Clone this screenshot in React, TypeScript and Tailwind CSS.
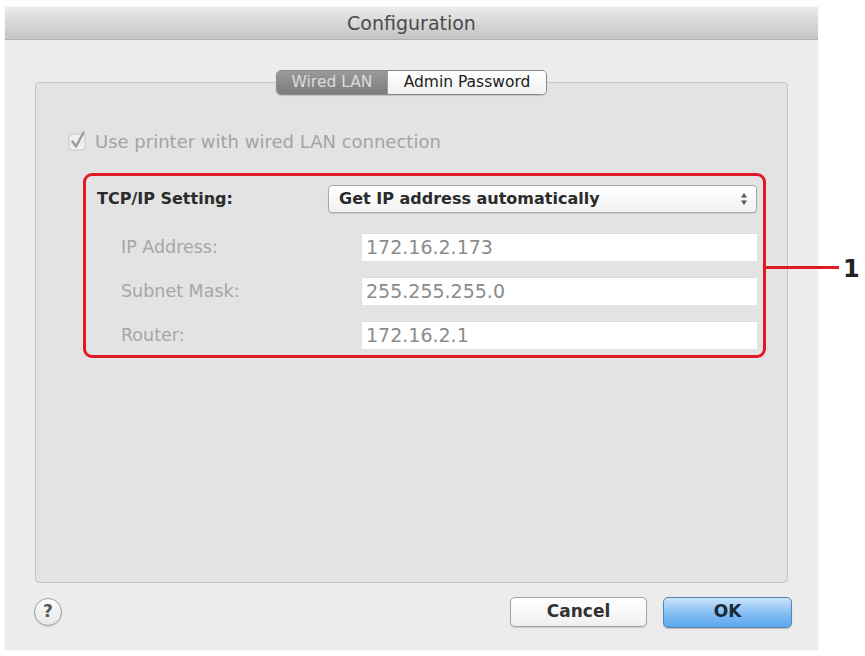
import React from 'react';

const font = { fontFamily: '"DejaVu Sans", "Liberation Sans", sans-serif' };

const fields = [
  { label: 'IP Address:', value: '172.16.2.173' },
  { label: 'Subnet Mask:', value: '255.255.255.0' },
  { label: 'Router:', value: '172.16.2.1' },
];

const App: React.FC = () => {
  return (
    <div className="relative w-[865px] h-[656px] bg-white pt-[7px] pl-[5px]" style={font}>
      {/* window */}
      <div className="w-[813px] h-[643px] bg-[#ececec] flex flex-col shadow-[0_0_2px_rgba(0,0,0,0.08)]">
        <div className="h-[33px] flex items-center justify-center bg-gradient-to-b from-[#ebebeb] to-[#c4c4c4] border-b border-[#b0b0b0] text-[19px] text-[#4b4b4b]">
          Configuration
        </div>

        <div className="flex flex-col px-[30px] pt-[42px]">
          {/* group box */}
          <div className="h-[501px] bg-[#e3e3e3] border border-[#c4c4c4] rounded-[4px] flex flex-col">
            <div className="flex justify-center -mt-[13px]">
              <div className="flex h-[25px] rounded-[5px] border border-[#8a8a8a] overflow-hidden text-[15.5px] shadow-[0_1px_1px_rgba(0,0,0,0.15)]">
                <div className="w-[110px] flex items-center justify-center bg-gradient-to-b from-[#9a9a9a] to-[#7c7c7c] text-[#dcdcdc]">
                  Wired LAN
                </div>
                <div className="w-[159px] flex items-center justify-center bg-gradient-to-b from-white to-[#f1f1f1] text-[#1e1e1e] border-l border-[#9a9a9a]">
                  Admin Password
                </div>
              </div>
            </div>

            {/* checkbox */}
            <div className="flex items-center gap-[7px] ml-[32px] mt-[36px] h-[20px]">
              <svg width="20" height="20" viewBox="0 0 20 20">
                <rect x="1" y="3" width="16" height="16" rx="3" fill="#efefef" stroke="#c9c9c9" />
                <path d="M4.5 10.5 L8 15.5 L15.5 1.5" fill="none" stroke="#9c9c9c" strokeWidth="2.4" strokeLinecap="round" strokeLinejoin="round" />
              </svg>
              <span className="text-[18px] text-[#a3a3a3]">Use printer with wired LAN connection</span>
            </div>

            {/* settings block */}
            <div className="ml-[47px] mt-[22px] w-[683px] h-[185px] border-[3px] border-[#e11b25] rounded-[9px] pt-[9px] pr-[6px] pl-[11px] flex flex-col">
              <div className="flex items-center h-[28px]">
                <span className="w-[231px] text-[16px] font-bold text-[#2b2b2b]">TCP/IP Setting:</span>
                <div className="flex-1 h-[28px] flex items-center justify-between pl-[10px] pr-[8px] rounded-[4px] border border-[#a9a9a9] bg-gradient-to-b from-white to-[#f2f2f2] shadow-[0_1px_1px_rgba(0,0,0,0.12)]">
                  <span className="text-[16px] font-bold text-[#2b2b2b]">Get IP address automatically</span>
                  <svg width="8" height="14" viewBox="0 0 8 14">
                    <path d="M4 1 L7 5.5 H1 Z" fill="#555" />
                    <path d="M4 13 L7 8.5 H1 Z" fill="#555" />
                  </svg>
                </div>
              </div>
              <div className="flex flex-col gap-[16px] mt-[20px]">
                {fields.map((f) => (
                  <div key={f.label} className="flex items-center h-[28px]">
                    <span className="w-[265px] pl-[24px] text-[17.5px] text-[#a6a6a6]">{f.label}</span>
                    <div className="flex-1 h-[28px] flex items-center pl-[4px] bg-white border-t border-[#dcdcdc]">
                      <span className="text-[19px] text-[#8c8c8c]">{f.value}</span>
                    </div>
                  </div>
                ))}
              </div>
            </div>
          </div>

          {/* bottom bar */}
          <div className="flex items-center mt-[13px] h-[32px]">
            <div className="-ml-[1px] w-[28px] h-[28px] rounded-full border border-[#9d9d9d] bg-gradient-to-b from-white to-[#e6e6e6] flex items-center justify-center text-[17px] font-bold text-[#555] shadow-[0_1px_1px_rgba(0,0,0,0.15)]">
              ?
            </div>
            <div className="flex-1" />
            <button className="w-[137px] h-[30px] rounded-[5px] border border-[#a4a4a4] bg-gradient-to-b from-white to-[#f0f0f0] text-[17px] font-bold text-[#333] shadow-[0_1px_1px_rgba(0,0,0,0.15)]">
              Cancel
            </button>
            <button className="ml-[16px] -mr-[4px] w-[129px] h-[31px] rounded-[5px] border border-[#5b84b6] bg-gradient-to-b from-[#cbe4fb] via-[#86bff2] to-[#5aa6ee] text-[17px] font-bold text-[#1a2a3a] shadow-[0_1px_1px_rgba(0,0,0,0.2)]">
              OK
            </button>
          </div>
        </div>
      </div>

      {/* callout */}
      <div className="absolute left-[765px] top-[266px] w-[74px] h-[3px] bg-[#e11b25]" />
      <div className="absolute left-[843px] top-[257px] text-[24px] font-bold text-[#222] leading-none">1</div>
    </div>
  );
};

export default App;
